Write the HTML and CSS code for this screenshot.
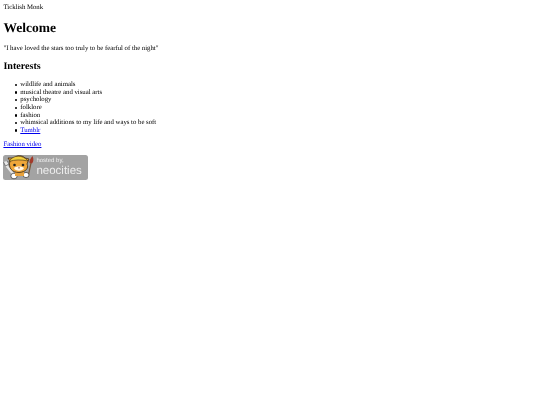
FILE: index.html
```html
<!DOCTYPE html>
<html lang="en">
<head>
    <meta charset="UTF-8">
    <title>Ticklish Monk</title>
    <link rel="stylesheet" href="styles.css">
</head>
<body>
    <div>Ticklish Monk</div>
    <h1>Welcome</h1>
    <p>"I have loved the stars too truly to be fearful of the night"</p>
    <h2>Interests</h2>
    <ul>
        <li>wildlife and animals</li>
        <li>musical theatre and visual arts</li>
        <li>psychology</li>
        <li>folklore</li>
        <li>fashion</li>
        <li>whimsical additions to my life and ways to be soft</li>
        <li><a href="#">Tumblr</a></li>
    </ul>
    <p class="video"><a href="#">Fashion video</a></p>
    <a class="badge" href="#">
        <svg class="badge-cat" viewBox="0 0 32 25" width="32" height="25">
            <!-- wrench -->
            <path d="M3 10 L11 20" stroke="#e4e4e4" stroke-width="2.400" fill="none"/>
            <path d="M0.500 7 L2.500 11 L6 9 L4 6" fill="#e8e8e8" stroke="#444" stroke-width=".6"/>
            <!-- brush -->
            <path d="M28 8 L25 22" stroke="#7a5a3a" stroke-width="1.200" fill="none"/>
            <path d="M26.500 8 C26 5 28 3 29.500 1 C31 4 30.500 7 29 8.500 Z" fill="#a33a2a"/>
            <!-- arms and feet -->
            <ellipse cx="11" cy="21" rx="3.200" ry="2.800" fill="#fff" stroke="#333" stroke-width=".7"/>
            <ellipse cx="23" cy="20" rx="3" ry="2.600" fill="#fff" stroke="#333" stroke-width=".7"/>
            <path d="M12 15 H21 V21 H12 Z" fill="#e8a23c"/>
            <!-- head -->
            <path d="M7 6 L5 3 L11 3 C14 0 19 0 22 3 L26 4 L24 9 C26 13 23 17 16 17.500 C9 17.500 5 13 7 6 Z" fill="#efa73a" stroke="#3a2a18" stroke-width=".8"/>
            <path d="M6 6.500 C10 -0.500 20 -0.500 25 6 C18 4.500 12 4.500 6 6.500 Z" fill="#f2cf3e" stroke="#3a2a18" stroke-width=".6"/>
            <path d="M11 13 C13 11 19 11 21 13 C20 16.500 12 16.500 11 13 Z" fill="#fff6e6"/>
            <circle cx="11.500" cy="10" r="1.300" fill="#222"/>
            <circle cx="20" cy="10" r="1.300" fill="#222"/>
            <path d="M15 12.500 H17 L16 13.700 Z" fill="#7a2a1a"/>
        </svg>
        <span class="badge-text">
            <span class="badge-small">hosted by,</span>
            <span class="badge-name">neocities</span>
        </span>
    </a>
</body>
</html>
```

FILE: styles.css
```css
body {
    margin: 4px 3.4px;
    font-family: "Liberation Serif", "Times New Roman", serif;
    font-size: 6.75px;
    line-height: 7.6px;
    color: #000;
    background: #fff;
    text-rendering: geometricPrecision;
    filter: blur(0.3px);
}

h1 {
    font-size: 13.5px;
    line-height: 15.6px;
    margin: 8.45px 0 9.05px;
}

h2 {
    font-size: 10.1px;
    line-height: 11.4px;
    margin: 8.4px 0;
}

p {
    margin: 6.75px 0;
}

ul {
    list-style: none;
    margin: 9.2px 0 6.75px;
    padding-left: 16.9px;
}

li {
    position: relative;
}

li::before {
    content: "";
    position: absolute;
    left: -5.6px;
    top: 2.6px;
    width: 2.4px;
    height: 2.4px;
    border-radius: 50%;
    background: #000;
}

a {
    color: #0000ee;
}

.video {
    margin-bottom: 6.4px;
}

.badge {
    display: flex;
    align-items: center;
    width: 85px;
    height: 25px;
    background: #a3a3a3;
    border-radius: 2.5px;
    text-decoration: none;
    color: #eee;
    font-family: "Liberation Sans", Arial, sans-serif;
}

.badge-cat {
    flex: none;
}

.badge-text {
    display: flex;
    flex-direction: column;
    margin-left: 1px;
}

.badge-small {
    font-size: 6px;
    line-height: 7px;
}

.badge-name {
    font-size: 11.5px;
    line-height: 13.2px;
}
```
